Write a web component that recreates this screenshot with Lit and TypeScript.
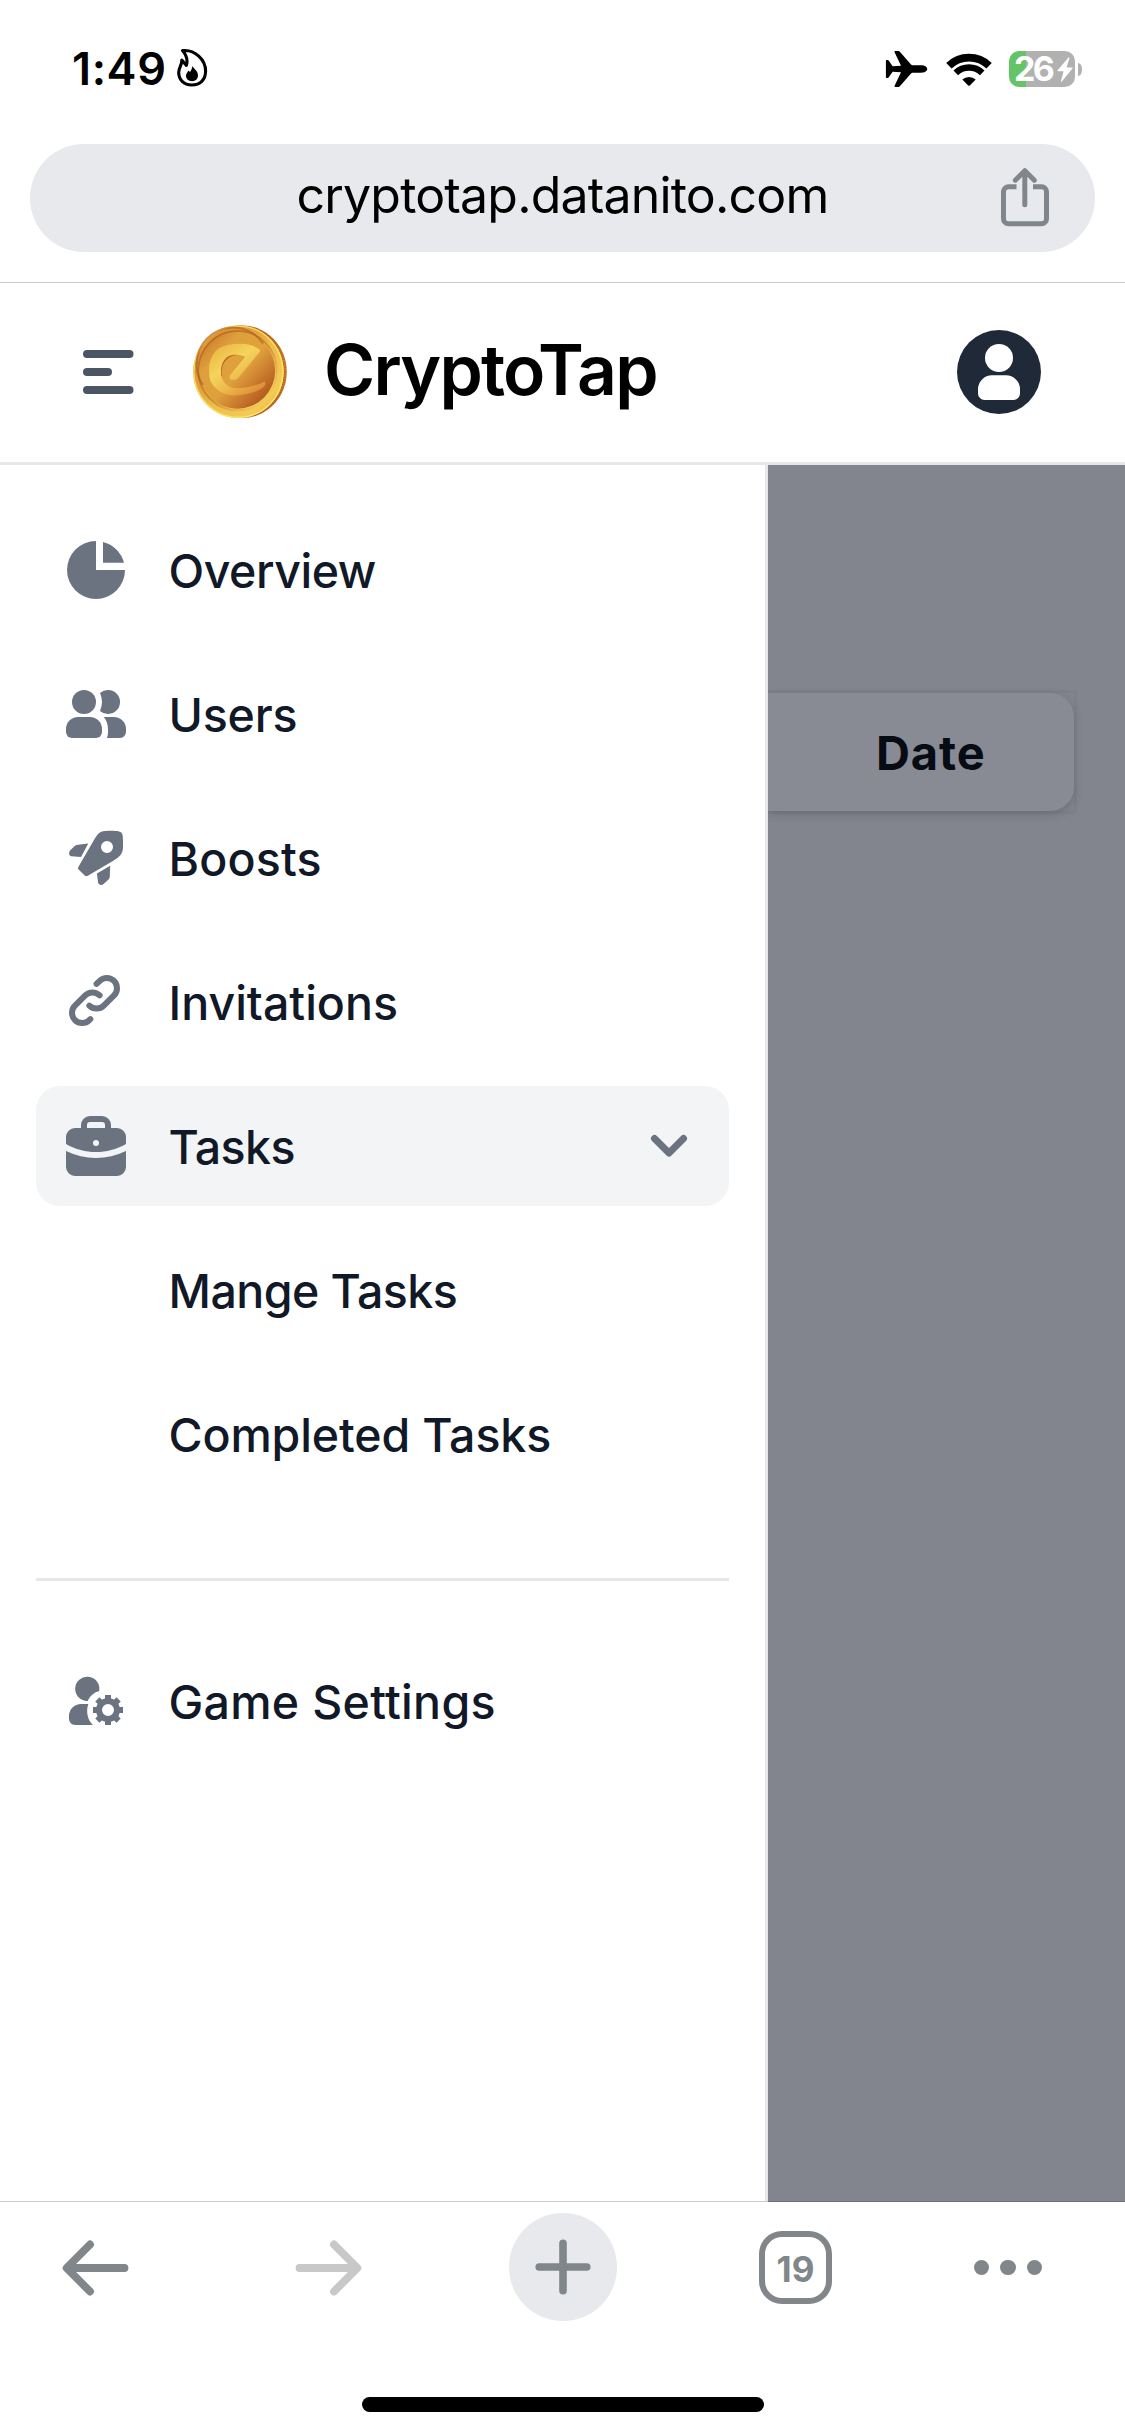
import { LitElement, html, css, svg, SVGTemplateResult } from "lit";
import { customElement, property } from "lit/decorators.js";
import { classMap } from "lit/directives/class-map.js";
import { styleMap } from "lit/directives/style-map.js";

interface NavEntry {
  label: string;
  spacing: number;
  icon?: string;
  active?: boolean;
}

const icons: Record<string, SVGTemplateResult> = {
  overview: svg`<path d="M36 7A29 29 0 1 0 65 36H36Z"/><path d="M43 8V28.7H64A29 29 0 0 0 43 8Z"/>`,
  users: svg`<circle cx="24" cy="24" r="12"/>
    <path d="M40 15.1A12 12 0 1 1 40 32.9Q44 24 40 15.1Z"/>
    <path d="M18 39H30A12 12 0 0 1 42 51V54A6 6 0 0 1 36 60H12A6 6 0 0 1 6 54V51A12 12 0 0 1 18 39Z"/>
    <path d="M43.7 39H54A12 12 0 0 1 66 51V54A6 6 0 0 1 60 60H46.9C47.6 58.5 48 56 48 54V51C48 46.5 46.5 42 43.7 39Z"/>`,
  boosts: svg`<path fill-rule="evenodd" d="M35 16.3C37 13 38 11.6 40 10.4C42 9 47 8.8 51 8.8C54 8.8 57 9 59 9.4C61.2 9.9 62.3 11 62.6 13.3C63 16 63.1 21 63 25.5C62.8 32 59.5 35 53.3 38.7L27.8 53.8C26.5 54.4 25.6 54.3 24.7 53.5L18.6 47.6C17.8 46.8 17.8 46 18.3 45ZM47 19A6 6 0 1 0 47 31A6 6 0 1 0 47 19Z"/>
    <path d="M28.3 21.6L21 35L11.3 34.2C9 33.8 8.4 30.8 10 28.5L14.5 24.3C15.5 23.3 16.3 22.9 18 22.8Z"/>
    <path d="M50.2 43.8L49.8 54.3C49.7 56 49.3 56.8 48.3 57.8L43.6 62.1C41.5 63.8 38.5 63 38.1 60.6L36.9 51.4Z"/>`,
  invitations: svg`<path transform="scale(3)" fill="none" stroke="currentColor" stroke-width="2" stroke-linecap="round" stroke-linejoin="round" d="M13.213 9.787a3.391 3.391 0 0 0-4.795 0l-3.425 3.426a3.39 3.39 0 0 0 4.795 4.794l.321-.304m-.321-4.49a3.39 3.39 0 0 0 4.795 0l3.424-3.426a3.39 3.39 0 0 0-4.794-4.795l-1.028.961"/>`,
  tasks: svg`<path fill-rule="evenodd" d="M30 6H42A9 9 0 0 1 51 15V18H57A9 9 0 0 1 66 27V34C47 44.7 25 44.7 6 34V27A9 9 0 0 1 15 18H21V15A9 9 0 0 1 30 6ZM30 12A3 3 0 0 0 27 15V18H45V15A3 3 0 0 0 42 12ZM36 30A3 3 0 1 0 36 36A3 3 0 1 0 36 30Z"/>
    <path d="M6 41C25 50.3 47 50.3 66 41V57A9 9 0 0 1 57 66H15A9 9 0 0 1 6 57Z"/>`,
  settings: svg`<path d="M39.2 26A12.1 12.1 0 1 0 27.8 36C29.5 31.5 33.5 27.5 39.2 26Z"/>
    <path d="M21 39H28.3C25.8 46.5 27.5 55 33 60H15A6 6 0 0 1 9 54V51A12 12 0 0 1 21 39Z"/>
    <circle cx="48" cy="45" r="9" fill="none" stroke="currentColor" stroke-width="6"/>
    <g>${[0, 45, 90, 135].map(
      (a) => svg`<path transform="rotate(${a} 48 45)" d="M45 30H51V35H45ZM45 55H51V60H45Z"/>`,
    )}</g>`,
};

@customElement("nav-row")
export class NavRow extends LitElement {
  @property({ attribute: false }) entry!: NavEntry;

  static styles = css`
    :host { display: block; }
    .row {
      box-sizing: border-box;
      height: 120px;
      padding: 24px;
      border-radius: 24px;
      display: flex;
      align-items: center;
      color: #111827;
    }
    .row.active { background: #f3f4f6; }
    svg { width: 72px; height: 72px; flex: none; fill: #6b7280; color: #6b7280; }
    .blank { width: 72px; flex: none; }
    .label {
      flex: 1;
      margin-left: 36.5px;
      padding-top: 2px;
      font: 500 46.5px/72px Inter, "Liberation Sans", sans-serif;
      white-space: nowrap;
    }
  `;

  render() {
    const e = this.entry;
    return html`<div class=${classMap({ row: true, active: !!e.active })}>
      ${e.icon
        ? html`<svg viewBox="0 0 72 72">${icons[e.icon]}</svg>`
        : html`<span class="blank"></span>`}
      <span class="label" style=${styleMap({ letterSpacing: `${e.spacing}px` })}>${e.label}</span>
      ${e.active
        ? html`<svg viewBox="0 0 72 72"><path d="M21.5 28.5L36 43L50.5 28.5" fill="none" stroke="currentColor" stroke-width="7" stroke-linecap="round" stroke-linejoin="round"/></svg>`
        : null}
    </div>`;
  }
}

const mainNav: NavEntry[] = [
  { label: "Overview", spacing: -0.45, icon: "overview" },
  { label: "Users", spacing: -0.2, icon: "users" },
  { label: "Boosts", spacing: 0.17, icon: "boosts" },
  { label: "Invitations", spacing: 0, icon: "invitations" },
  { label: "Tasks", spacing: -0.62, icon: "tasks", active: true },
  { label: "Mange Tasks", spacing: -0.55 },
  { label: "Completed Tasks", spacing: -0.13 },
];
const settingsNav: NavEntry = { label: "Game Settings", spacing: 0.3, icon: "settings" };

@customElement("app-root")
export class AppRoot extends LitElement {
  static styles = css`
    :host {
      display: block;
      width: 1125px;
      height: 2436px;
      overflow: hidden;
      background: #fff;
      color: #000;
      font-family: Inter, "Liberation Sans", sans-serif;
    }
    svg { display: block; flex: none; }

    .status { box-sizing: border-box; height: 138px; padding: 0 43px 0 72px; display: flex; align-items: center; }
    .time { width: 104px; font: 600 45px/54px Inter, sans-serif; letter-spacing: 0.6px; }
    .flame { width: 33px; height: 40px; margin-top: -2px; }
    .plane { width: 43px; height: 38px; margin-left: auto; }
    .wifi { width: 46px; height: 33px; margin-left: 18px; }
    .battery { display: flex; align-items: center; gap: 3px; margin-left: 17px; }
    .cell {
      box-sizing: border-box;
      width: 66px;
      height: 36px;
      padding-left: 5px;
      border-radius: 10px;
      background: linear-gradient(to right, #65c466 17px, #b1b1b1 17px);
      display: flex;
      align-items: center;
      gap: 4px;
      color: #fff;
      font: 700 34px/36px Inter, sans-serif;
      letter-spacing: -2.6px;
    }
    .bolt { width: 16px; height: 25px; margin-left: 1px; }
    .nub { width: 4px; height: 13px; border-radius: 0 4px 4px 0 / 0 6px 6px 0; background: #b1b1b1; }

    .address { box-sizing: border-box; height: 145px; padding: 6px 30px 30px; border-bottom: 1px solid #cbcbcb; }
    .pill {
      height: 108px;
      border-radius: 54px;
      background: #e8e9ed;
      display: grid;
      grid-template-columns: 95px 1fr 95px;
      align-items: center;
    }
    .url {
      grid-column: 2;
      padding-bottom: 7px;
      text-align: center;
      font: 400 50px/60px Inter, sans-serif;
      letter-spacing: -0.83px;
    }
    .share { width: 50px; height: 60px; margin-bottom: 2px; }

    .topbar {
      box-sizing: border-box;
      height: 182px;
      padding: 0 84px 2px 83px;
      border-bottom: 3px solid #e5e7eb;
      display: flex;
      align-items: center;
    }
    .burger { width: 51px; height: 44px; }
    .coin { width: 94px; height: 94px; margin-left: 59px; }
    .brand {
      margin-left: 37px;
      padding-bottom: 3px;
      font: 600 69.5px/84px Inter, sans-serif;
      letter-spacing: -1.8px;
    }
    .avatar { width: 84px; height: 84px; margin-left: auto; }

    .main { height: 1736px; display: grid; grid-template-columns: 768px 1fr; }
    .sidebar { box-sizing: border-box; padding: 45px 36px 0; border-right: 3px solid #e5e7eb; }
    .list { display: flex; flex-direction: column; gap: 24px; }
    .extra { margin-top: 84px; padding-top: 60px; border-top: 3px solid #e5e7eb; }
    .page { background: #82858d; padding: 225px 48px 0 0; overflow: hidden; }
    .sheet { height: 118px; border: 3px solid #7e8189; border-left: 0; }
    .head {
      box-sizing: border-box;
      height: 118px;
      padding-left: 108px;
      border-radius: 0 24px 24px 0;
      background: #888b93;
      box-shadow: 0 3px 9px rgba(60, 64, 74, 0.3);
      color: #070b14;
      font: 700 47px/120px Inter, sans-serif;
      letter-spacing: 0.9px;
    }

    .edge { height: 1px; background: linear-gradient(to right, #cbcbcb 768px, #706f77 768px); }
    .toolbar { height: 108px; margin-top: 11px; padding-left: 62px; display: flex; align-items: center; }
    .arrow { width: 67px; height: 56px; margin-top: 1px; }
    .fwd { margin-left: 166px; }
    .add {
      width: 108px;
      height: 108px;
      margin-left: 147px;
      border-radius: 50%;
      background: #e8e9ed;
      display: flex;
      align-items: center;
      justify-content: center;
    }
    .plus { width: 56px; height: 56px; }
    .tabs {
      box-sizing: border-box;
      width: 73px;
      height: 73px;
      margin: 1px 0 0 142px;
      padding-top: 2px;
      border: 6.5px solid #80868a;
      border-radius: 23px;
      color: #80868a;
      text-align: center;
      font: 700 35px/60px Inter, sans-serif;
    }
    .dots { display: flex; gap: 11px; margin: 1px 0 0 142px; }
    .dot { width: 15.4px; height: 15.4px; border-radius: 50%; background: #80868a; }
    .home { width: 402px; height: 15px; margin: 76px 0 0 362px; border-radius: 8px; background: #000; }
  `;

  render() {
    return html`
      <div class="status">
        <span class="time">1:49</span>
        <svg class="flame" viewBox="0 0 33 40">
          <path d="M6.5 2.6C19 1.2 29.6 12 29.6 23C29.6 32 24 37 15.8 37C7.7 37 2.7 31.5 2.7 24.5C2.7 19.5 6 17.5 5.8 12L10.4 17.4C12 12 10.3 7 6.5 2.6Z" fill="none" stroke="#000" stroke-width="3.1" stroke-linejoin="round"/>
          <path d="M16.5 18C17.5 21 22 22.5 22 27.5C22 31 19.5 33.2 16 33.2C12.5 33.2 10 31 10 27.8C10 25.5 11.5 24.5 12.5 22.5L14 24C15.5 22 16 20 16.5 18Z"/>
        </svg>
        <svg class="plane" viewBox="0 0 43 38">
          <path d="M42.2 19C42.2 17 40 15.3 36 15.3H28C27 15.3 26.5 15 25.8 14.2L15.3 2.2C14.5 1.3 14 1 13 1H10.4C9.6 1 9.3 1.5 9.6 2.2L16 15.7L7.6 16.3L4 11C3.5 10.2 3 10 2.2 10H1.7C1.2 10 .9 10.3 .9 10.8V27.2C.9 27.7 1.2 28 1.7 28H2.2C3 28 3.5 27.8 4 27L7.6 21.7L16 22.3L9.6 35.8C9.3 36.5 9.6 37 10.4 37H13C14 37 14.5 36.7 15.3 35.8L25.8 23.8C26.5 23 27 22.7 28 22.7H36C40 22.7 42.2 21 42.2 19Z"/>
        </svg>
        <svg class="wifi" viewBox="0 0 46 33">
          <g fill="none" stroke="#000">
            <path stroke-width="7.6" d="M2.9 12.7A29 29 0 0 1 43.1 12.7"/>
            <path stroke-width="6.6" d="M9.8 19.8A19 19 0 0 1 36.2 19.8"/>
          </g>
          <path d="M16.3 26.5A10 10 0 0 1 29.7 26.5L23.8 32.4Q23 33.2 22.2 32.4Z"/>
        </svg>
        <div class="battery">
          <div class="cell">
            <span>26</span>
            <svg class="bolt" viewBox="0 0 16 25"><path d="M11.5 .4L.6 13.2Q0 14.2 1 14.2H6.6L4 24Q3.9 25 4.8 24.4L15.5 11.4Q16 10.4 15 10.4H9.6L12.4 1Q12.4 0 11.5 .4Z" fill="#fff"/></svg>
          </div>
          <div class="nub"></div>
        </div>
      </div>

      <div class="address">
        <div class="pill">
          <span class="url">cryptotap.datanito.com</span>
          <svg class="share" viewBox="0 0 50 60">
            <g fill="none" stroke="#80868b" stroke-width="5" stroke-linecap="round" stroke-linejoin="round">
              <path stroke-linecap="butt" d="M16.5 19.7H8.5A5 5 0 0 0 3.5 24.7V51.7A5 5 0 0 0 8.5 56.7H41.5A5 5 0 0 0 46.5 51.7V24.7A5 5 0 0 0 41.5 19.7H33"/>
              <path d="M24.8 37.7V5M15.3 13.2L24.8 3.7L34.3 13.2"/>
            </g>
          </svg>
        </div>
      </div>

      <header class="topbar">
        <svg class="burger" viewBox="0 0 51 44" fill="#4b5563">
          <rect y="0" width="50.5" height="8" rx="4"/>
          <rect y="18" width="29" height="8" rx="4"/>
          <rect y="36" width="50.5" height="8" rx="4"/>
        </svg>
        <svg class="coin" viewBox="0 0 94 94">
          <defs>
            <linearGradient id="side" x1="0" y1="0" x2="0" y2="1">
              <stop offset="0" stop-color="#b9671f"/><stop offset=".45" stop-color="#d08030"/><stop offset="1" stop-color="#c0641f"/>
            </linearGradient>
            <linearGradient id="rim" x1="0" y1="0" x2="1" y2="1">
              <stop offset="0" stop-color="#efb545"/><stop offset=".2" stop-color="#dc9234"/><stop offset=".4" stop-color="#e6a53c"/>
              <stop offset=".55" stop-color="#f0bd49"/><stop offset=".8" stop-color="#f5cb55"/><stop offset="1" stop-color="#df9633"/>
            </linearGradient>
            <linearGradient id="line" x1="0" y1="0" x2="1" y2="1">
              <stop offset="0" stop-color="#f4d352"/><stop offset=".5" stop-color="#f7e063"/><stop offset="1" stop-color="#faea6c"/>
            </linearGradient>
            <linearGradient id="well" x1=".05" y1=".1" x2=".9" y2=".9">
              <stop offset="0" stop-color="#cc7c2e"/><stop offset=".25" stop-color="#dea03c"/><stop offset=".55" stop-color="#e0a13d"/>
              <stop offset=".75" stop-color="#cb7d2f"/><stop offset="1" stop-color="#ad5219"/>
            </linearGradient>
            <linearGradient id="lip" x1="0" y1="0" x2="1" y2="1">
              <stop offset="0" stop-color="#b4611f"/><stop offset=".5" stop-color="#d08a33"/><stop offset="1" stop-color="#f8e268"/>
            </linearGradient>
            <linearGradient id="mark" x1=".1" y1=".1" x2=".8" y2="1">
              <stop offset="0" stop-color="#ecb746"/><stop offset=".35" stop-color="#f4d55c"/><stop offset=".65" stop-color="#edb94c"/><stop offset="1" stop-color="#dc8b35"/>
            </linearGradient>
          </defs>
          <ellipse cx="49" cy="46.7" rx="44.8" ry="46.3" fill="url(#side)"/>
          <ellipse cx="48.5" cy="46.7" rx="43.6" ry="45" fill="none" stroke="#94430f" stroke-width="2.6" stroke-dasharray="1 1.6" opacity=".4"/>
          <ellipse cx="45.4" cy="46.7" rx="45.2" ry="46.3" fill="url(#rim)"/>
          <ellipse cx="45.4" cy="46.7" rx="44.5" ry="45.6" fill="none" stroke="url(#line)" stroke-width="1.4"/>
          <ellipse cx="44.6" cy="45.7" rx="39.2" ry="39.6" fill="none" stroke="url(#lip)" stroke-width="2"/>
          <ellipse cx="44.2" cy="45.5" rx="38" ry="38.2" fill="url(#well)"/>
          <path d="M10 60A35.6 36 0 0 1 70 18.5" fill="none" stroke="#a2571c" stroke-width="2" opacity=".55"/>
          <path d="M52 31.5C48 28.5 41 28.3 36 31.5C29 36 26.5 44 28.5 51.5" fill="none" stroke="#b36522" stroke-width="1.6"/>
          <path d="M67 25C62 21 56 18.6 47 18.8C38 18.8 30 20.5 24.5 24.5C19 29 16 37 16 45C16 53 17.5 58.5 23 63.5C28 68.3 35 70.6 42 70.5C52 70.3 64 67.5 71.3 61.5C72.5 60 72.5 58.5 72 56.5C65 60 52 63.5 43 63.3C33 63 28 55 28 47C28 39 31 33.5 36 31C41 28.7 47 29.5 52 32L37.8 49.5C35.5 52.5 36.5 54.8 40 54.8C43 54.8 44.5 54 46 52L66.2 27.5C67.2 26.4 67.4 25.8 67 25Z" fill="url(#mark)"/>
        </svg>
        <span class="brand">CryptoTap</span>
        <svg class="avatar" viewBox="0 0 84 84">
          <circle cx="42" cy="42" r="42" fill="#1f2937"/>
          <circle cx="42" cy="28" r="14" fill="#fff"/>
          <path d="M35 45.3H49A14 14 0 0 1 63 59.3V63.5A6.5 6.5 0 0 1 56.5 70H27.5A6.5 6.5 0 0 1 21 63.5V59.3A14 14 0 0 1 35 45.3Z" fill="#fff"/>
        </svg>
      </header>

      <div class="main">
        <nav class="sidebar">
          <div class="list">${mainNav.map((entry) => html`<nav-row .entry=${entry}></nav-row>`)}</div>
          <div class="extra"><nav-row .entry=${settingsNav}></nav-row></div>
        </nav>
        <div class="page">
          <div class="sheet"><div class="head">Date</div></div>
        </div>
      </div>

      <div class="edge"></div>
      <div class="toolbar">
        <svg class="arrow" viewBox="0 0 67 56"><path d="M62.5 28H5M28 4.5L4.6 28L28 51.5" fill="none" stroke="#80868a" stroke-width="7.8" stroke-linecap="round" stroke-linejoin="round"/></svg>
        <svg class="arrow fwd" viewBox="0 0 67 56"><path d="M4.5 28H62M39 4.5L62.4 28L39 51.5" fill="none" stroke="#c8c8c8" stroke-width="7.8" stroke-linecap="round" stroke-linejoin="round"/></svg>
        <div class="add">
          <svg class="plus" viewBox="0 0 56 56"><path d="M28 4.2V51.8M4.2 28H51.8" stroke="#80868a" stroke-width="7.6" stroke-linecap="round"/></svg>
        </div>
        <div class="tabs">19</div>
        <div class="dots"><span class="dot"></span><span class="dot"></span><span class="dot"></span></div>
      </div>
      <div class="home"></div>
    `;
  }
}
